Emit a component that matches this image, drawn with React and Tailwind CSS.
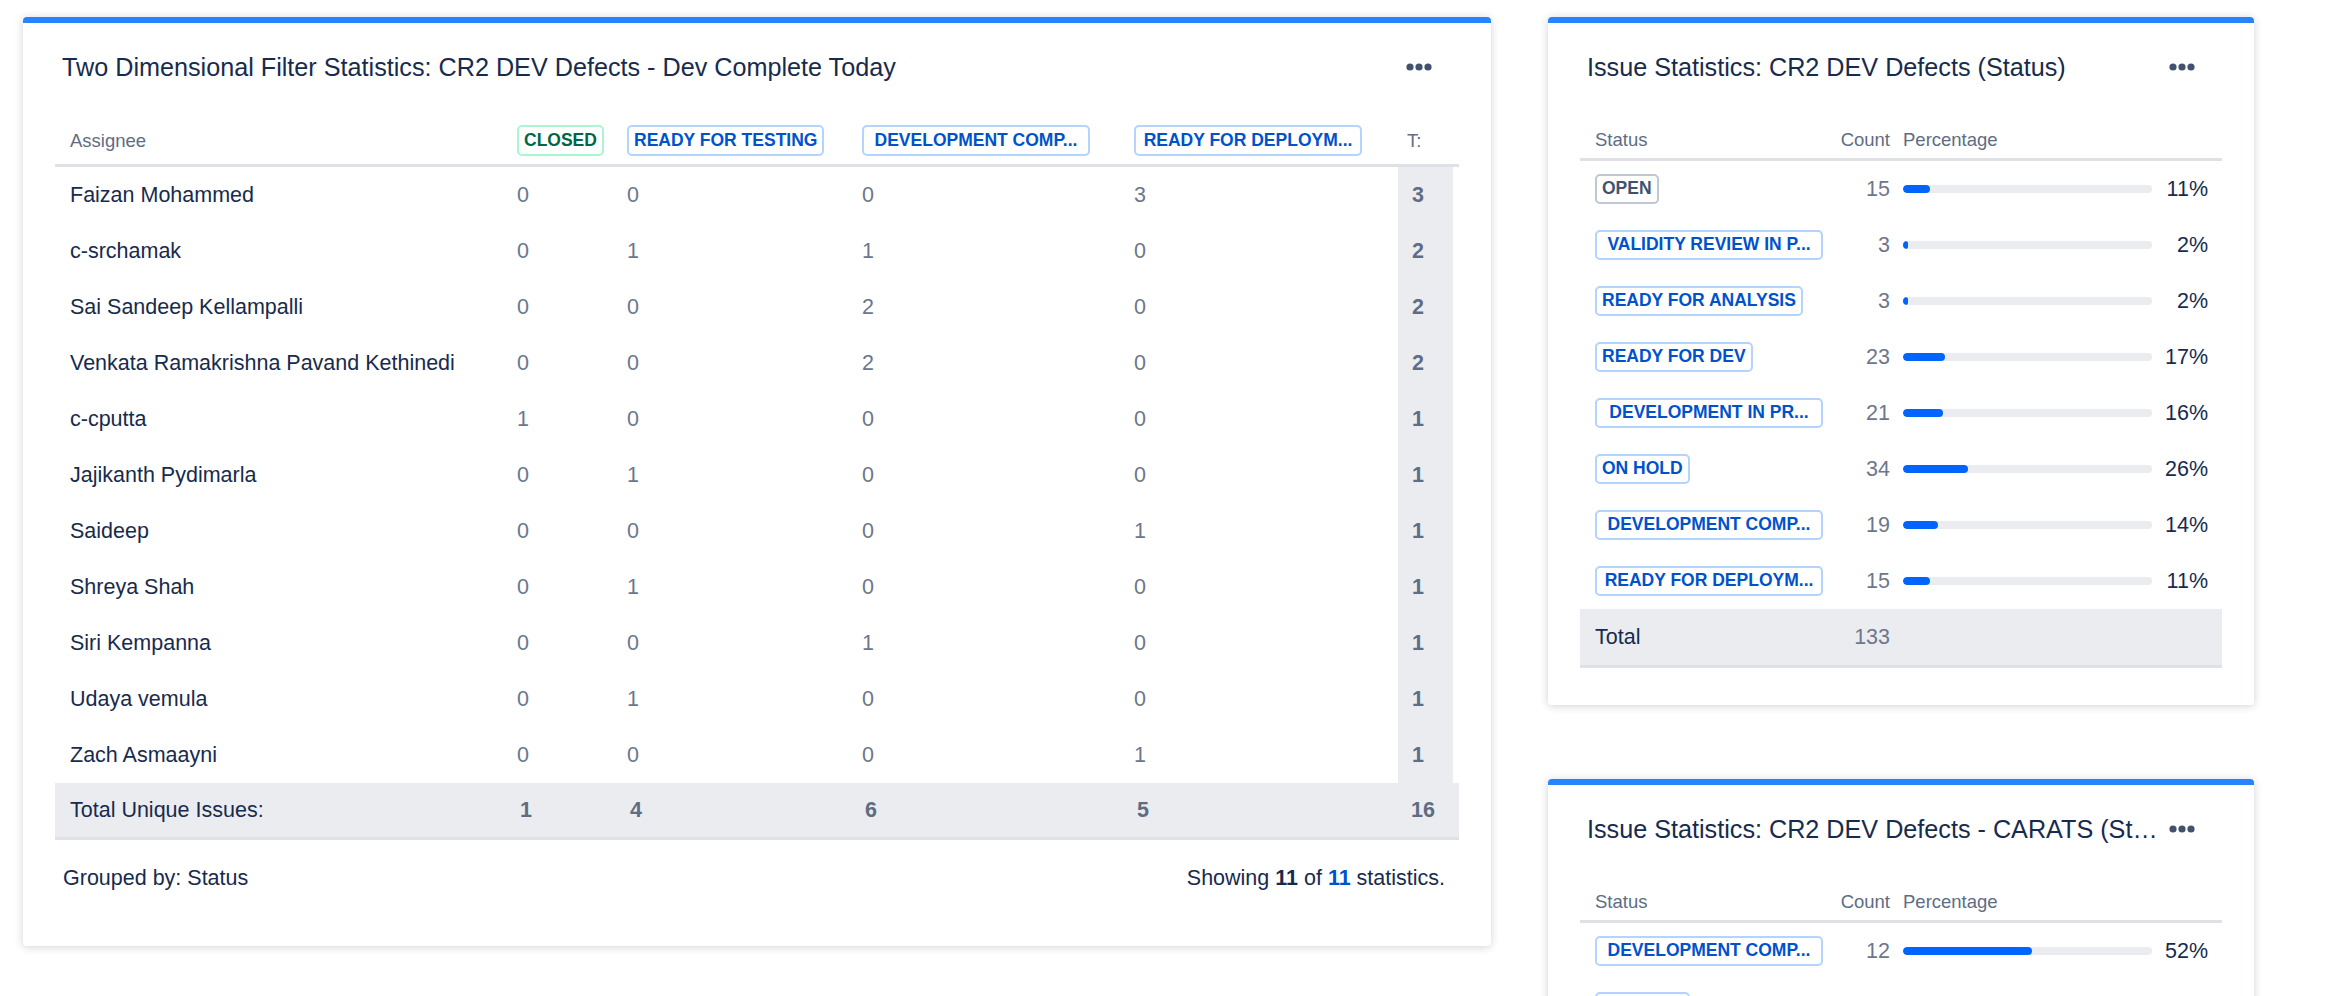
import React from "react";

const twoDimRows = [
  { name: "Faizan Mohammed", cells: [0, 0, 0, 3], total: 3 },
  { name: "c-srchamak", cells: [0, 1, 1, 0], total: 2 },
  { name: "Sai Sandeep Kellampalli", cells: [0, 0, 2, 0], total: 2 },
  { name: "Venkata Ramakrishna Pavand Kethinedi", cells: [0, 0, 2, 0], total: 2 },
  { name: "c-cputta", cells: [1, 0, 0, 0], total: 1 },
  { name: "Jajikanth Pydimarla", cells: [0, 1, 0, 0], total: 1 },
  { name: "Saideep", cells: [0, 0, 0, 1], total: 1 },
  { name: "Shreya Shah", cells: [0, 1, 0, 0], total: 1 },
  { name: "Siri Kempanna", cells: [0, 0, 1, 0], total: 1 },
  { name: "Udaya vemula", cells: [0, 1, 0, 0], total: 1 },
  { name: "Zach Asmaayni", cells: [0, 0, 0, 1], total: 1 },
];

const statusRows = [
  { label: "OPEN", tone: "gray", count: 15, pct: 11 },
  { label: "VALIDITY REVIEW IN P...", tone: "blue", count: 3, pct: 2 },
  { label: "READY FOR ANALYSIS", tone: "blue", count: 3, pct: 2 },
  { label: "READY FOR DEV", tone: "blue", count: 23, pct: 17 },
  { label: "DEVELOPMENT IN PR...", tone: "blue", count: 21, pct: 16 },
  { label: "ON HOLD", tone: "blue", count: 34, pct: 26 },
  { label: "DEVELOPMENT COMP...", tone: "blue", count: 19, pct: 14 },
  { label: "READY FOR DEPLOYM...", tone: "blue", count: 15, pct: 11 },
];

const caratsRows = [
  { label: "DEVELOPMENT COMP...", tone: "blue", count: 12, pct: 52 },
  { label: "ON HOLD", tone: "blue", count: 11, pct: 48 },
];

const tones = {
  blue: "border-[#b3d4ff] text-[#0052cc]",
  green: "border-[#abf5d1] text-[#006644]",
  gray: "border-[#c1c7d0] text-[#42526e]",
};

const Lozenge = ({ tone, children, h = "h-[31px]" }) => {
  // long statuses are cut and sit in a full-width lozenge
  const cut = typeof children === "string" && children.endsWith("...");
  return (
    <span
      className={`inline-flex items-center ${h} ${cut ? "w-[228px] justify-center" : ""} max-w-[228px] px-[5px] border-2 rounded-[5px] bg-white text-[17.5px] font-bold leading-none whitespace-nowrap overflow-hidden ${tones[tone]}`}
    >
      {children}
    </span>
  );
};

const Dots = () => (
  <svg width="26" height="8" viewBox="0 0 26 8" className="text-[#42526e] shrink-0">
    <circle cx="4" cy="4" r="3.6" fill="currentColor" />
    <circle cx="13" cy="4" r="3.6" fill="currentColor" />
    <circle cx="22" cy="4" r="3.6" fill="currentColor" />
  </svg>
);

const CardTitle = ({ children }) => (
  <div className="flex items-center justify-between pl-[39px] pr-[59px] pt-[28px] h-[60px]">
    <h2 className="text-[25.2px] leading-[32px] text-[#172b4d] truncate pr-[2px]">{children}</h2>
    <Dots />
  </div>
);

const cols = "grid grid-cols-[462px_110px_235px_272px_264px_55px]";

const TwoDimensionalCard = () => (
  <div className="w-[1468px] h-[929px] bg-white rounded-[4px] border-t-[6px] border-[#2684ff] shadow-[0_1px_8px_rgba(9,30,66,0.2)] flex flex-col">
    <CardTitle>Two Dimensional Filter Statistics: CR2 DEV Defects - Dev Complete Today</CardTitle>

    <div className="mx-[32px] mt-[34px]">
      <div className={`${cols} h-[50px] border-b-[3px] border-[#dfe1e6] text-[18.5px] text-[#5e6c84]`}>
        <div className="flex items-center pl-[15px]">Assignee</div>
        <div className="flex items-center">
          <Lozenge tone="green">CLOSED</Lozenge>
        </div>
        <div className="flex items-center">
          <Lozenge tone="blue">READY FOR TESTING</Lozenge>
        </div>
        <div className="flex items-center">
          <Lozenge tone="blue">DEVELOPMENT COMP...</Lozenge>
        </div>
        <div className="flex items-center">
          <Lozenge tone="blue">READY FOR DEPLOYM...</Lozenge>
        </div>
        <div className="flex items-center pl-[9px]">T:</div>
      </div>

      {twoDimRows.map((row) => (
        <div key={row.name} className={`${cols} h-[56px] text-[21.5px]`}>
          <div className="flex items-center pl-[15px] text-[#172b4d] whitespace-nowrap">{row.name}</div>
          {row.cells.map((c, i) => (
            <div key={i} className="flex items-center text-[#6b778c]">
              {c}
            </div>
          ))}
          <div className="flex items-center pl-[14px] bg-[#ebecf0] font-bold text-[#5e6c84]">{row.total}</div>
        </div>
      ))}

      <div className={`${cols} h-[57px] bg-[#ebecf0] border-b-[3px] border-[#dfe1e6] text-[21.5px]`}>
        <div className="flex items-center pl-[15px] text-[#172b4d]">Total Unique Issues:</div>
        {[1, 4, 6, 5].map((v, i) => (
          <div key={i} className="flex items-center pl-[3px] font-bold text-[#5e6c84]">
            {v}
          </div>
        ))}
        <div className="flex items-center pl-[13px] font-bold text-[#5e6c84]">16</div>
      </div>
    </div>

    <div className="flex items-center justify-between pl-[40px] pr-[46px] mt-[23px] h-[30px] text-[21.5px] text-[#172b4d]">
      <span>Grouped by: Status</span>
      <span>
        Showing <span className="font-bold">11</span> of{" "}
        <span className="font-bold text-[#0052cc]">11</span> statistics.
      </span>
    </div>
  </div>
);

const statCols = "grid grid-cols-[246px_64px_262px_64px]";

const StatRow = ({ row }) => (
  <div className={`${statCols} h-[56px] items-center text-[21.5px]`}>
    <div className="pl-[15px] flex">
      <Lozenge tone={row.tone} h="h-[30px]">
        {row.label}
      </Lozenge>
    </div>
    <div className="text-right text-[#6b778c]">{row.count}</div>
    <div className="pl-[13px]">
      <div className="h-[8px] rounded-full bg-[#ebecf0] overflow-hidden">
        <div className="h-full rounded-full bg-[#0065ff]" style={{ width: `${Math.max(row.pct, 2)}%` }} />
      </div>
    </div>
    <div className="text-right pr-[8px] text-[#172b4d]">{row.pct}%</div>
  </div>
);

const IssueStatsCard = ({ title, rows, total }) => (
  <div className="w-[706px] bg-white rounded-[4px] border-t-[6px] border-[#2684ff] shadow-[0_1px_8px_rgba(9,30,66,0.2)] flex flex-col">
    <CardTitle>{title}</CardTitle>
    <div className="mx-[32px] mt-[39px]">
      <div className={`${statCols} h-[39px] items-center border-b-[3px] border-[#dfe1e6] text-[18.5px] text-[#5e6c84]`}>
        <div className="pl-[15px]">Status</div>
        <div className="text-right">Count</div>
        <div className="col-span-2 pl-[13px]">Percentage</div>
      </div>
      {rows.map((row) => (
        <StatRow key={row.label} row={row} />
      ))}
      <div className={`${statCols} h-[59px] items-center bg-[#ebecf0] border-b-[3px] border-[#dfe1e6] text-[21.5px]`}>
        <div className="pl-[15px] text-[#172b4d]">Total</div>
        <div className="text-right text-[#6b778c]">{total}</div>
      </div>
    </div>
    <div className="h-[37px]" />
  </div>
);

export default function App() {
  return (
    <div className="h-screen overflow-hidden bg-white font-['Liberation_Sans',Arial,sans-serif]">
      <div className="flex items-start gap-[57px] pt-[17px] pl-[23px]">
        <TwoDimensionalCard />
        <div className="flex flex-col gap-[74px]">
          <IssueStatsCard title="Issue Statistics: CR2 DEV Defects (Status)" rows={statusRows} total={133} />
          <IssueStatsCard title="Issue Statistics: CR2 DEV Defects - CARATS (Status)" rows={caratsRows} total={23} />
        </div>
      </div>
    </div>
  );
}
